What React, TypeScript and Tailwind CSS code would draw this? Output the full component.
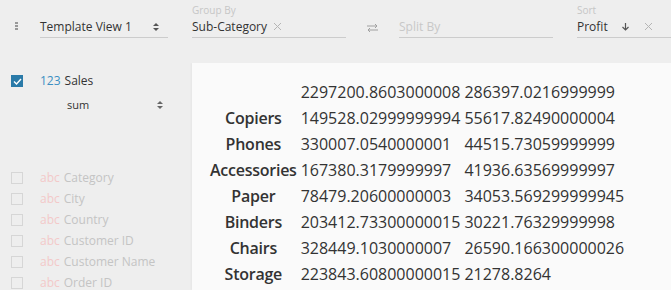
import React from 'react'

const rows: [string, string, string][] = [
  ['Copiers', '149528.02999999994', '55617.82490000004'],
  ['Phones', '330007.0540000001', '44515.73059999999'],
  ['Accessories', '167380.3179999997', '41936.63569999997'],
  ['Paper', '78479.20600000003', '34053.569299999945'],
  ['Binders', '203412.73300000015', '30221.76329999998'],
  ['Chairs', '328449.1030000007', '26590.166300000026'],
  ['Storage', '223843.60800000015', '21278.8264'],
]

const columns = [
  'Category',
  'City',
  'Country',
  'Customer ID',
  'Customer Name',
  'Order ID',
]

function UpDown({ className }: { className?: string }) {
  return (
    <svg width="6" height="8" viewBox="0 0 6 8" className={className}>
      <path d="M3 0 L6 3 L0 3 Z" fill="currentColor" />
      <path d="M3 8 L6 5 L0 5 Z" fill="currentColor" />
    </svg>
  )
}

function Close() {
  return (
    <svg width="9" height="9" viewBox="0 0 9 9" className="text-[#b5b5b5]">
      <path d="M1 1 L8 8 M8 1 L1 8" stroke="currentColor" strokeWidth="1" />
    </svg>
  )
}

function Field({
  label,
  width,
  children,
}: {
  label?: string
  width?: string
  children: React.ReactNode
}) {
  return (
    <div className={`flex flex-col pt-[4px] ${width ?? ''}`}>
      <div className="h-[12px] text-[10px] leading-[12px] text-[#c6c6c6]">{label}</div>
      <div className="flex h-[22px] items-center border-b border-[#cccccc] text-[12px] text-[#333]">
        {children}
      </div>
    </div>
  )
}

export default function App() {
  return (
    <div className="flex h-[290px] w-[671px] flex-col overflow-hidden bg-[#eeeeee] font-['Open_Sans',sans-serif]">
      <div className="flex h-[63px] shrink-0 items-start">
        <div className="flex w-[40px] pl-[15px] pt-[22px]">
          <div className="flex flex-col gap-[1px]">
            <span className="h-[2px] w-[3px] bg-[#999]" />
            <span className="h-[2px] w-[3px] bg-[#999]" />
            <span className="h-[2px] w-[3px] bg-[#999]" />
          </div>
        </div>
        <Field width="w-[128px]">
          <span className="flex-1">Template View 1</span>
          <UpDown className="mr-[9px] text-[#555]" />
        </Field>
        <Field label="Group By" width="ml-[24px] w-[154px]">
          <span>Sub-Category</span>
          <span className="ml-[6px] flex">
            <Close />
          </span>
        </Field>
        <div className="flex w-[53px] pl-[21px] pt-[24px]">
          <svg width="11" height="8" viewBox="0 0 11 8" className="text-[#a0a0a0]">
            <path d="M0 2 H10 M8 0 L10 2 L8 4" stroke="currentColor" fill="none" strokeWidth="1" />
            <path d="M11 6 H1 M3 4 L1 6 L3 8" stroke="currentColor" fill="none" strokeWidth="1" />
          </svg>
        </div>
        <Field width="w-[154px]">
          <span className="text-[#c8c8c8]">Split By</span>
        </Field>
        <Field label="Sort" width="ml-[24px] flex-1">
          <span>Profit</span>
          <svg width="7" height="8" viewBox="0 0 7 8" className="ml-[14px] text-[#555]">
            <path d="M3.5 0 V7 M0.5 4 L3.5 7 L6.5 4" stroke="currentColor" fill="none" strokeWidth="1.2" />
          </svg>
          <span className="ml-[15px] flex">
            <Close />
          </span>
        </Field>
      </div>

      <div className="flex min-h-0 flex-1 overflow-hidden">
        <div className="flex w-[192px] shrink-0 flex-col pt-[8px]">
          <div className="flex h-[20px] shrink-0 items-center pl-[11px]">
            <span className="flex h-[12px] w-[12px] items-center justify-center bg-[#2a7aa8]">
              <svg width="9" height="7" viewBox="0 0 9 7">
                <path d="M1 3.5 L3.5 6 L8 1" stroke="white" fill="none" strokeWidth="1.4" />
              </svg>
            </span>
            <span className="ml-[17px] text-[12px] text-[#3b8ec2]">123</span>
            <span className="ml-[4px] text-[12px] text-[#333]">Sales</span>
          </div>
          <div className="mt-[4px] flex h-[20px] shrink-0 items-center pl-[67px] pr-[29px]">
            <span className="flex-1 text-[11px] text-[#333]">sum</span>
            <UpDown className="text-[#666]" />
          </div>
          <div className="mt-[52px] flex shrink-0 flex-col">
            {columns.map((c) => (
              <div key={c} className="flex h-[21px] items-center pl-[11px]">
                <span className="h-[12px] w-[12px] border border-[#d6d6d6]" />
                <span className="ml-[17px] text-[12px] text-[#f3c9c9]">abc</span>
                <span className="ml-[4px] text-[12px] text-[#c4c4c4]">{c}</span>
              </div>
            ))}
          </div>
        </div>

        <div className="flex-1 bg-[#fafafa] pl-[16px] pt-[16px] shadow-[-1px_0_2px_rgba(0,0,0,0.04)]">
          <table className="text-[16px] leading-[26px] text-[#333]">
            <tbody>
              <tr>
                <th className="px-[2px]" />
                <td className="px-[2px]">2297200.8603000008</td>
                <td className="px-[2px]">286397.0216999999</td>
              </tr>
              {rows.map(([name, a, b]) => (
                <tr key={name}>
                  <th className="px-[2px] text-center font-semibold tracking-[-0.25px]">{name}</th>
                  <td className="px-[2px]">{a}</td>
                  <td className="px-[2px]">{b}</td>
                </tr>
              ))}
            </tbody>
          </table>
        </div>
      </div>
    </div>
  )
}
